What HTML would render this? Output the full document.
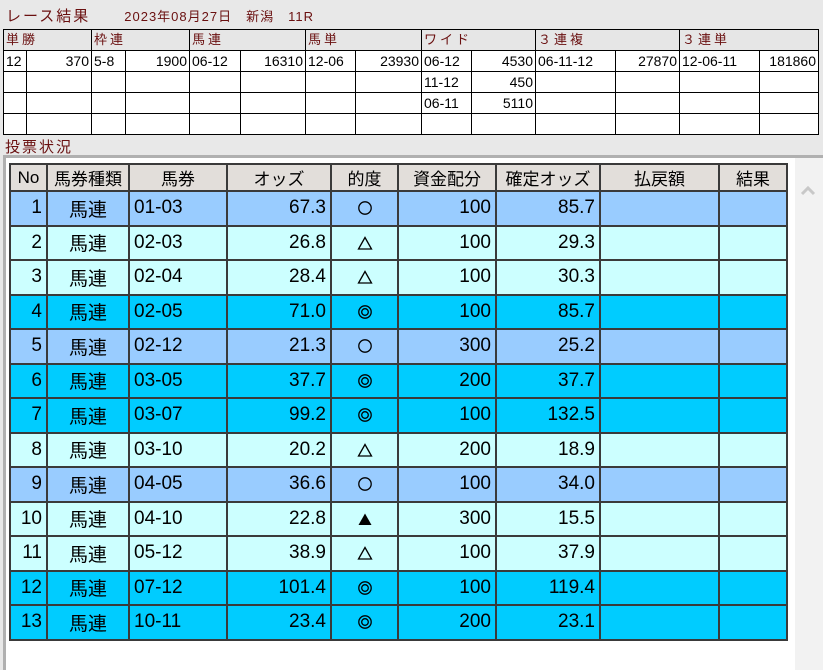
<!DOCTYPE html>
<html><head><meta charset="utf-8"><style>
*{margin:0;padding:0;box-sizing:border-box}
body{width:823px;height:670px;background:#e8e8e8;position:relative;overflow:hidden;font-family:"Liberation Sans","Noto Sans CJK JP",sans-serif}
.t{position:absolute;color:#6a1010;font-size:15px;white-space:nowrap;letter-spacing:2px}
#top{position:absolute;left:3px;top:29px;border-collapse:collapse;table-layout:fixed;font-size:14px;font-family:"Liberation Sans","Noto Sans CJK JP",sans-serif}
#top td{border:1.5px solid #000;height:21px;padding:0 2px;white-space:nowrap;background:#fff;line-height:18px;overflow:hidden}
#top tr.h td{background:#e6e6e6;color:#6a1010;height:21px;letter-spacing:3px;font-size:13px}
#top td.r{text-align:right}
#panel{position:absolute;left:3px;top:155px;width:820px;height:515px;background:#fff;border-top:3px solid #b0b0b0;border-left:3px solid #b0b0b0}
#sb{position:absolute;left:795px;top:158px;width:28px;height:512px;background:#f2f2f2}
#main{position:absolute;left:9px;top:163px;border-collapse:collapse;table-layout:fixed;font-size:19px}
#main td{border:2px solid #3a3a3a;height:34.5px;padding:0 4px;white-space:nowrap}
#main tr.h td{background:#e2deda;height:27px;text-align:center;font-size:17px}
#main td svg{display:block;margin:0 auto}
.r{text-align:right}.c{text-align:center}
.a td{background:#99ccff}.b td{background:#ccffff}.d td{background:#00ccff}
</style></head><body>
<svg width="0" height="0" style="position:absolute"><defs>
<symbol id="o" viewBox="0 0 16 16"><circle cx="8" cy="8" r="6.2" fill="none" stroke="#000" stroke-width="1.3"/></symbol>
<symbol id="oo" viewBox="0 0 16 16"><circle cx="8" cy="8" r="6.2" fill="none" stroke="#000" stroke-width="1.3"/><circle cx="8" cy="8" r="3.3" fill="none" stroke="#000" stroke-width="1.3"/></symbol>
<symbol id="tr" viewBox="0 0 16 16"><path d="M8 2.5 L14.5 14 L1.5 14 Z" fill="none" stroke="#000" stroke-width="1.3"/></symbol>
<symbol id="bt" viewBox="0 0 16 16"><path d="M8 2.5 L14.5 14 L1.5 14 Z" fill="#000"/></symbol>
</defs></svg>
<div class="t" style="left:6px;top:5px">レース結果　　<span style="font-size:13px;letter-spacing:1px">2023年08月27日　新潟　11R</span></div>
<table id="top">
<colgroup><col style="width:23px"><col style="width:65px"><col style="width:34px"><col style="width:64px"><col style="width:51px"><col style="width:65px"><col style="width:50px"><col style="width:66px"><col style="width:50px"><col style="width:64px"><col style="width:80px"><col style="width:64px"><col style="width:80px"><col style="width:59px"></colgroup>
<tr class="h"><td colspan="2">単勝</td><td colspan="2">枠連</td><td colspan="2">馬連</td><td colspan="2">馬単</td><td colspan="2">ワイド</td><td colspan="2">３連複</td><td colspan="2">３連単</td></tr>
<tr><td>12</td><td class="r">370</td><td>5-8</td><td class="r">1900</td><td>06-12</td><td class="r">16310</td><td>12-06</td><td class="r">23930</td><td>06-12</td><td class="r">4530</td><td>06-11-12</td><td class="r">27870</td><td>12-06-11</td><td class="r">181860</td></tr>
<tr><td></td><td></td><td></td><td></td><td></td><td></td><td></td><td></td><td>11-12</td><td class="r">450</td><td></td><td></td><td></td><td></td></tr>
<tr><td></td><td></td><td></td><td></td><td></td><td></td><td></td><td></td><td>06-11</td><td class="r">5110</td><td></td><td></td><td></td><td></td></tr>
<tr><td></td><td></td><td></td><td></td><td></td><td></td><td></td><td></td><td></td><td></td><td></td><td></td><td></td><td></td></tr>
</table>
<div class="t" style="left:5px;top:136px">投票状況</div>
<div id="panel"></div>
<div id="sb"><svg width="28" height="40" style="position:absolute;left:0;top:18px"><path d="M7 18 L13 12 L19 18" fill="none" stroke="#c8c8c8" stroke-width="3"/></svg></div>
<table id="main">
<colgroup><col style="width:37px"><col style="width:82px"><col style="width:98px"><col style="width:104px"><col style="width:67px"><col style="width:98px"><col style="width:104px"><col style="width:119px"><col style="width:68px"></colgroup>
<tr class="h"><td class="r">No</td><td>馬券種類</td><td>馬券</td><td>オッズ</td><td>的度</td><td>資金配分</td><td>確定オッズ</td><td>払戻額</td><td>結果</td></tr>
<tr class="a"><td class="r">1</td><td class="c">馬連</td><td>01-03</td><td class="r">67.3</td><td><svg width="16" height="16"><use href="#o"/></svg></td><td class="r">100</td><td class="r">85.7</td><td></td><td></td></tr>
<tr class="b"><td class="r">2</td><td class="c">馬連</td><td>02-03</td><td class="r">26.8</td><td><svg width="16" height="16"><use href="#tr"/></svg></td><td class="r">100</td><td class="r">29.3</td><td></td><td></td></tr>
<tr class="b"><td class="r">3</td><td class="c">馬連</td><td>02-04</td><td class="r">28.4</td><td><svg width="16" height="16"><use href="#tr"/></svg></td><td class="r">100</td><td class="r">30.3</td><td></td><td></td></tr>
<tr class="d"><td class="r">4</td><td class="c">馬連</td><td>02-05</td><td class="r">71.0</td><td><svg width="16" height="16"><use href="#oo"/></svg></td><td class="r">100</td><td class="r">85.7</td><td></td><td></td></tr>
<tr class="a"><td class="r">5</td><td class="c">馬連</td><td>02-12</td><td class="r">21.3</td><td><svg width="16" height="16"><use href="#o"/></svg></td><td class="r">300</td><td class="r">25.2</td><td></td><td></td></tr>
<tr class="d"><td class="r">6</td><td class="c">馬連</td><td>03-05</td><td class="r">37.7</td><td><svg width="16" height="16"><use href="#oo"/></svg></td><td class="r">200</td><td class="r">37.7</td><td></td><td></td></tr>
<tr class="d"><td class="r">7</td><td class="c">馬連</td><td>03-07</td><td class="r">99.2</td><td><svg width="16" height="16"><use href="#oo"/></svg></td><td class="r">100</td><td class="r">132.5</td><td></td><td></td></tr>
<tr class="b"><td class="r">8</td><td class="c">馬連</td><td>03-10</td><td class="r">20.2</td><td><svg width="16" height="16"><use href="#tr"/></svg></td><td class="r">200</td><td class="r">18.9</td><td></td><td></td></tr>
<tr class="a"><td class="r">9</td><td class="c">馬連</td><td>04-05</td><td class="r">36.6</td><td><svg width="16" height="16"><use href="#o"/></svg></td><td class="r">100</td><td class="r">34.0</td><td></td><td></td></tr>
<tr class="b"><td class="r">10</td><td class="c">馬連</td><td>04-10</td><td class="r">22.8</td><td><svg width="16" height="16"><use href="#bt"/></svg></td><td class="r">300</td><td class="r">15.5</td><td></td><td></td></tr>
<tr class="b"><td class="r">11</td><td class="c">馬連</td><td>05-12</td><td class="r">38.9</td><td><svg width="16" height="16"><use href="#tr"/></svg></td><td class="r">100</td><td class="r">37.9</td><td></td><td></td></tr>
<tr class="d"><td class="r">12</td><td class="c">馬連</td><td>07-12</td><td class="r">101.4</td><td><svg width="16" height="16"><use href="#oo"/></svg></td><td class="r">100</td><td class="r">119.4</td><td></td><td></td></tr>
<tr class="d"><td class="r">13</td><td class="c">馬連</td><td>10-11</td><td class="r">23.4</td><td><svg width="16" height="16"><use href="#oo"/></svg></td><td class="r">200</td><td class="r">23.1</td><td></td><td></td></tr>
</table>
</body></html>
